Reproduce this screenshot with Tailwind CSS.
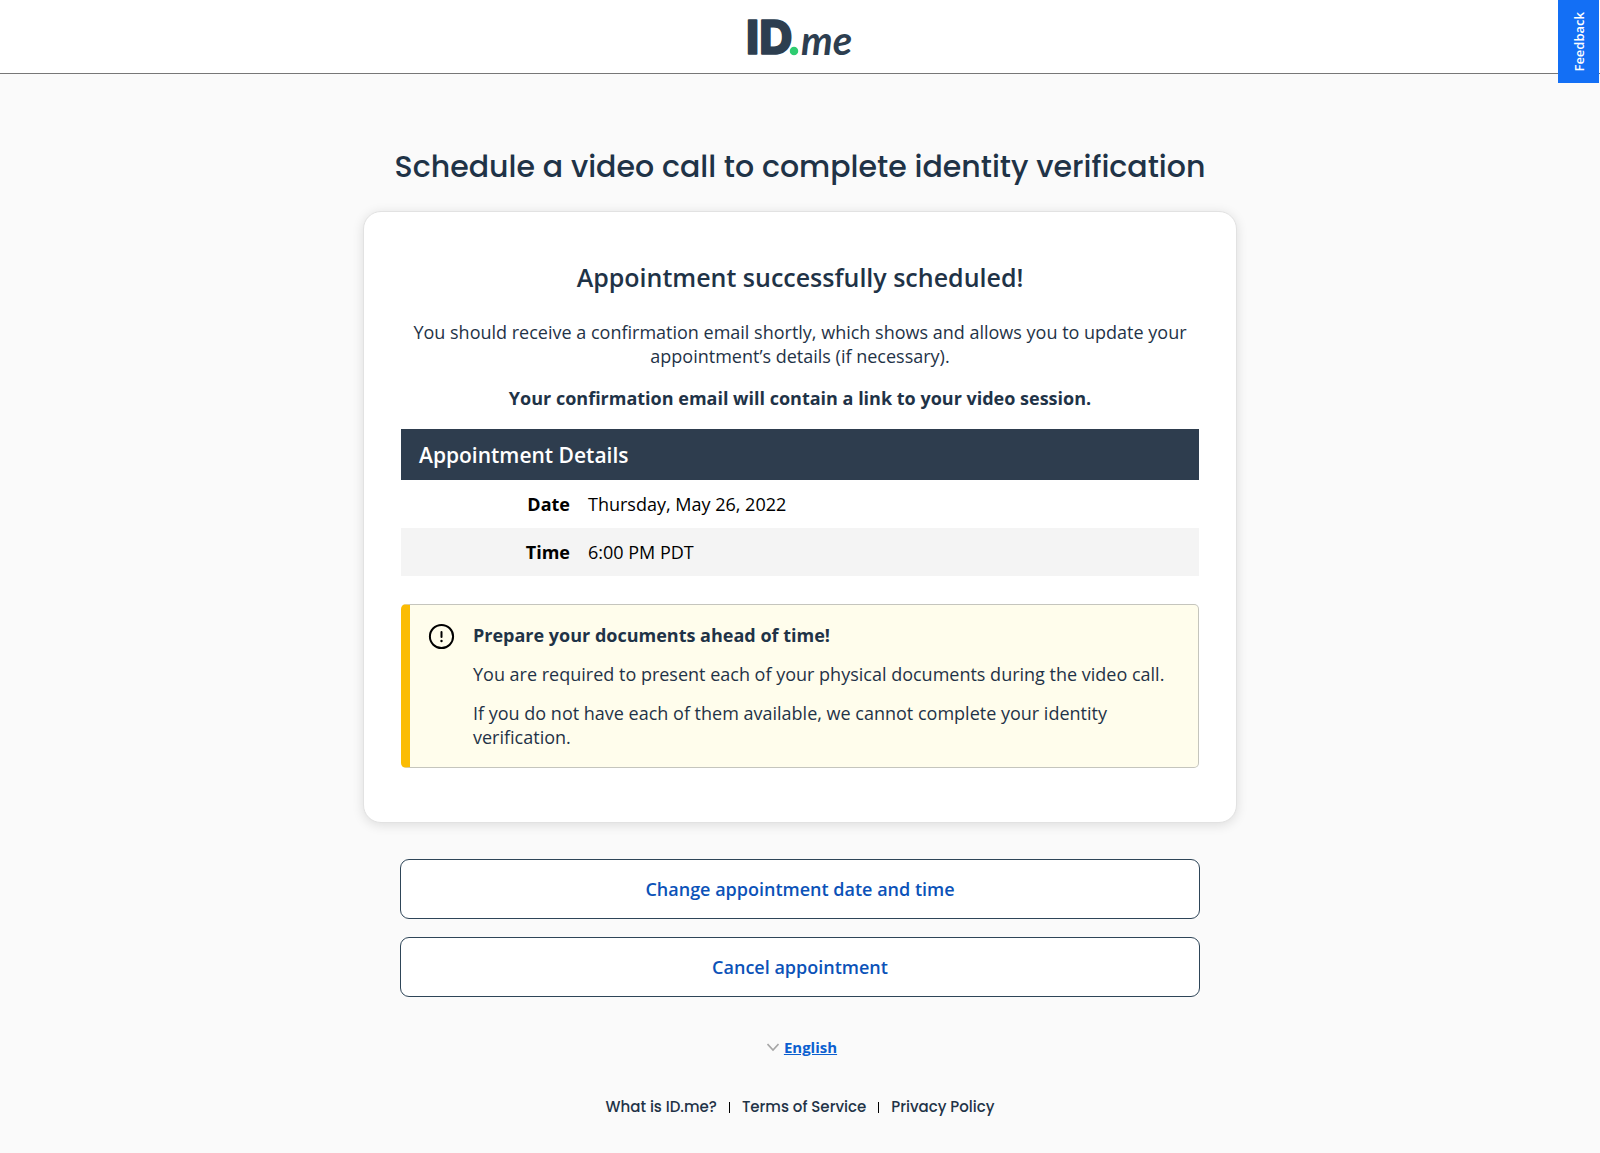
<!DOCTYPE html>
<html lang="en">
<head>
    <meta charset="UTF-8">
    <meta name="viewport" content="width=device-width, initial-scale=1.0">
    <title>ID.me - Appointment scheduled</title>
    <script src="https://cdn.jsdelivr.net/npm/@tailwindcss/browser@4"></script>
</head>
<body class="min-h-screen bg-[#fafafa] font-['Open_Sans',sans-serif] text-lg leading-6 text-[#1f3347]">
    <!-- Header -->
    <header class="flex h-[74px] items-center justify-center border-b border-[#777] bg-white">
        <a href="#" aria-label="ID.me">
            <svg class="h-[60px] w-[120px]" viewBox="0 0 120 60" fill="#2d3e50">
                <text x="6" y="47" font-family="Inter, sans-serif" font-size="46" font-weight="800" stroke="#2d3e50" stroke-width="1.6" stroke-linejoin="round">ID</text>
                <circle cx="54" cy="44" r="5" fill="#2ecc71" stroke="#fff" stroke-width="1.5"/>
                <text x="61" y="48" font-family="Lato, sans-serif" font-size="40" font-weight="700" font-style="italic">me</text>
            </svg>
        </a>
    </header>

    <button class="fixed top-0 right-px flex h-[83px] w-[41px] items-center justify-center bg-[#136ff5] text-[13px] font-semibold text-white">
        <span class="rotate-180 [writing-mode:vertical-rl]">Feedback</span>
    </button>

    <main class="mx-auto max-w-[874px] pt-[73px]">
        <h1 class="text-center font-['Poppins','Inter',sans-serif] text-[30px] leading-10 font-medium">Schedule a video call to complete identity verification</h1>

        <!-- Confirmation card -->
        <section class="mt-6 rounded-[18px] border border-[#e2e2e2] bg-white px-[37px] pt-[49px] pb-[54px] shadow-[0_2px_12px_rgba(0,0,0,0.12)]">
            <h2 class="text-center text-[25px] leading-8 font-semibold">Appointment successfully scheduled!</h2>
            <p class="mt-[27px] text-center">You should receive a confirmation email shortly, which shows and allows you to update your appointment’s details (if necessary).</p>
            <p class="mt-[18px] text-center font-bold">Your confirmation email will contain a link to your video session.</p>

            <table class="mt-[19px] w-full text-left text-black">
                <thead>
                    <tr class="h-[51px] bg-[#2e3d4e] text-white">
                        <th colspan="2" class="px-[18px] text-[21px] font-semibold">Appointment Details</th>
                    </tr>
                </thead>
                <tbody>
                    <tr class="h-12">
                        <th class="w-[178px] pr-[9px] text-right font-bold">Date</th>
                        <td class="pl-[9px]">Thursday, May 26, 2022</td>
                    </tr>
                    <tr class="h-12 bg-[#f4f4f4]">
                        <th class="pr-[9px] text-right font-bold">Time</th>
                        <td class="pl-[9px]">6:00 PM PDT</td>
                    </tr>
                </tbody>
            </table>

            <!-- Notice -->
            <div class="mt-7 flex gap-[18px] rounded-[5px] border border-l-[9px] border-[#c5c5bd] border-l-[#fbbc04] bg-[#fffdec] py-[18px] pr-5 pl-[18px]">
                <svg class="h-[27px] w-[27px] shrink-0 text-black" viewBox="0 0 27 27" fill="none" stroke="currentColor" stroke-width="2" stroke-linecap="round">
                    <circle cx="13.5" cy="13.5" r="11.6"/>
                    <path d="M13.5 9v5"/>
                    <path d="M13.5 18v.1" stroke-width="2.4"/>
                </svg>
                <div class="space-y-[15px]">
                    <p class="font-bold">Prepare your documents ahead of time!</p>
                    <p>You are required to present each of your physical documents during the video call.</p>
                    <p>If you do not have each of them available, we cannot complete your identity verification.</p>
                </div>
            </div>
        </section>

        <!-- Actions -->
        <div class="mt-9 space-y-[18px] px-[37px]">
            <button class="h-[60px] w-full rounded-[9px] border border-[#2e4558] bg-white font-semibold text-[#0b52b8]">Change appointment date and time</button>
            <button class="h-[60px] w-full rounded-[9px] border border-[#2e4558] bg-white font-semibold text-[#0b52b8]">Cancel appointment</button>
        </div>
    </main>

    <!-- Footer -->
    <footer class="pb-8">
        <div class="mt-[38px] flex justify-center pl-1">
            <button class="flex items-center gap-[5px] text-[15px] font-bold text-[#0b5fd0]">
                <svg class="h-3 w-3" viewBox="0 0 12 12" fill="none" stroke="#a6a6a6" stroke-width="1.6">
                    <path d="M0.5 3L6 9L11.5 3"/>
                </svg>
                <span class="underline">English</span>
            </button>
        </div>
        <nav class="mt-9 flex items-center justify-center gap-3 font-['Poppins','Inter',sans-serif] text-[15px] font-medium">
            <a href="#">What is ID.me?</a>
            <span class="h-[11px] w-px bg-black"></span>
            <a href="#">Terms of Service</a>
            <span class="h-[11px] w-px bg-black"></span>
            <a href="#">Privacy Policy</a>
        </nav>
    </footer>
</body>
</html>
